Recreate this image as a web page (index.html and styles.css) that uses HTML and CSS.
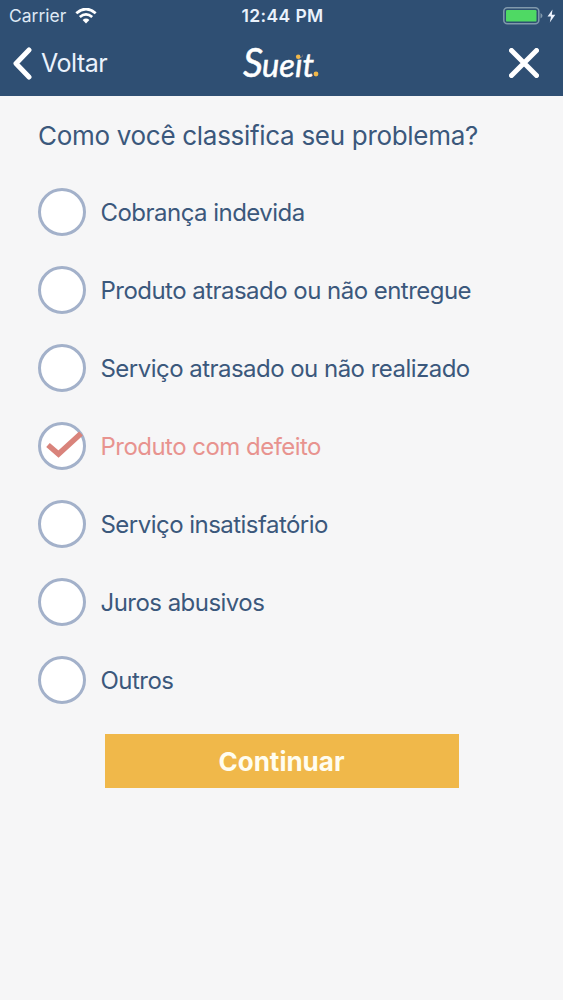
FILE: index.html
```html
<!DOCTYPE html>
<html lang="pt-BR">
<head>
  <meta charset="UTF-8" />
  <title>Sueit</title>
  <meta name="viewport" content="width=device-width, initial-scale=1.0" />
  <link rel="stylesheet" href="styles.css">
</head>
<body>
  <header class="header">
    <div class="status-bar">
      <div class="status-left">
        <span class="carrier">Carrier</span>
        <svg class="wifi" width="22" height="16" viewBox="0 0 22 16">
          <path d="M1.3 5.2 Q11 -3 20.7 5.2" />
          <path d="M4.8 9 Q11 3.8 17.2 9" />
          <path class="wifi-dot" d="M7.6 12 Q11 9.2 14.4 12 L11 15.4 Z" />
        </svg>
      </div>
      <span class="time">12:44 PM</span>
      <div class="status-right">
        <svg width="53" height="18" viewBox="0 0 53 18">
          <rect class="battery-shell" x="0.8" y="0.8" width="35" height="16" rx="3.5" />
          <rect class="battery-level" x="3" y="3" width="30.5" height="11.6" rx="1.2" />
          <path class="battery-tip" d="M37.5 6 Q39.5 7 39.5 8.8 Q39.5 10.6 37.5 11.6 Z" />
          <path class="bolt" d="M49.5 2.5 L44.5 9.6 H48 L46.8 15.5 L52.3 7.8 H48.8 Z" />
        </svg>
      </div>
    </div>

    <nav class="nav">
      <a class="back" href="#">
        <svg class="back-icon" width="20" height="33" viewBox="0 0 20 33">
          <path d="M17 3 L4 16.5 L17 30" />
        </svg>
        <span class="back-label">Voltar</span>
      </a>
      <svg class="logo" width="90" height="60" viewBox="0 0 90 60">
        <text class="logo-initial" x="12" y="43.5" textLength="20" lengthAdjust="spacingAndGlyphs">S</text>
        <text class="logo-text" x="31" y="43.5" textLength="52" lengthAdjust="spacingAndGlyphs">ueit</text>
        <circle class="logo-mask" cx="68.2" cy="20.8" r="3.8" />
        <circle class="logo-dot" cx="67.2" cy="23.8" r="2.3" />
        <circle class="logo-dot" cx="85" cy="41" r="2.4" />
      </svg>
      <a class="close" href="#">
        <svg width="30" height="30" viewBox="0 0 30 30">
          <path d="M2.5 2.5 L27.5 27.5 M27.5 2.5 L2.5 27.5" />
        </svg>
      </a>
    </nav>
  </header>

  <main class="content">
    <h1 class="question">Como você classifica seu problema?</h1>

    <ul class="options">
      <li class="option"><span class="radio"></span><span class="label">Cobrança indevida</span></li>
      <li class="option"><span class="radio"></span><span class="label">Produto atrasado ou não entregue</span></li>
      <li class="option"><span class="radio"></span><span class="label">Serviço atrasado ou não realizado</span></li>
      <li class="option selected">
        <span class="radio">
          <svg class="check" width="48" height="48" viewBox="0 0 48 48">
            <path d="M10 23 L20.5 32 L43 11.5" />
          </svg>
        </span>
        <span class="label">Produto com defeito</span>
      </li>
      <li class="option"><span class="radio"></span><span class="label">Serviço insatisfatório</span></li>
      <li class="option"><span class="radio"></span><span class="label">Juros abusivos</span></li>
      <li class="option"><span class="radio"></span><span class="label">Outros</span></li>
    </ul>

    <button class="btn">Continuar</button>
  </main>
</body>
</html>
```

FILE: styles.css
```css
:root {
  --navy: #2f4f73;
  --text: #3b587c;
  --ring: #a3b1ca;
  --coral: #e8938f;
  --amber: #f0b84a;
}

body {
  margin: 0;
  min-height: 100vh;
  font-family: Inter, 'Liberation Sans', sans-serif;
  background: #f6f6f7;
  color: var(--text);
}

.header {
  height: 96px;
  background: var(--navy);
  color: white;
}

.status-bar {
  display: grid;
  grid-template-columns: 1fr auto 1fr;
  align-items: center;
  height: 31px;
  padding: 0 7px 1px 9px;
}

.status-left {
  display: flex;
  align-items: center;
  gap: 9px;
}

.carrier {
  font-size: 17.5px;
  color: #dfe9f5;
}

.wifi {
  fill: none;
  stroke: white;
  stroke-width: 2.8;
}

.wifi-dot {
  fill: white;
  stroke: none;
}

.time {
  font-size: 17.5px;
  font-weight: 600;
  letter-spacing: 0.4px;
  color: #eaf2fc;
}

.status-right {
  display: flex;
  justify-content: flex-end;
}

.battery-shell {
  fill: none;
  stroke: #8099ac;
  stroke-width: 1.5;
}

.battery-level {
  fill: #4fd964;
}

.battery-tip {
  fill: #8099ac;
}

.bolt {
  fill: #eef4ff;
}

.nav {
  display: grid;
  grid-template-columns: 1fr auto 1fr;
  align-items: center;
  height: 62px;
  padding: 0 24px 0 12px;
}

.back {
  display: flex;
  align-items: center;
  gap: 9px;
  color: #eaf2fc;
  text-decoration: none;
}

.back-icon,
.close svg {
  fill: none;
  stroke: white;
  stroke-width: 5;
  stroke-linecap: round;
  stroke-linejoin: round;
}

.back-label {
  font-size: 25px;
  letter-spacing: -0.5px;
}

.logo {
  font-family: Lato, 'Liberation Sans', sans-serif;
  font-style: italic;
  fill: white;
}

.logo-initial,
.logo-text {
  stroke: white;
  stroke-width: 0.5;
}

.logo-initial {
  font-size: 40px;
}

.logo-text {
  font-size: 32px;
}

.logo-mask {
  fill: var(--navy);
}

.logo-dot {
  fill: var(--amber);
}

.close {
  display: flex;
  justify-content: flex-end;
}

.content {
  padding: 0 38px;
}

.question {
  margin: 0;
  padding-top: 20px;
  font-size: 26px;
  font-weight: 400;
  line-height: 40px;
  letter-spacing: -0.3px;
  white-space: nowrap;
}

.options {
  display: flex;
  flex-direction: column;
  gap: 30px;
  margin: 32px 0 30px;
  padding: 0;
  list-style: none;
}

.option {
  display: flex;
  align-items: center;
  gap: 15px;
  font-size: 24px;
  letter-spacing: -0.53px;
  white-space: nowrap;
}

.radio {
  box-sizing: border-box;
  width: 48px;
  height: 48px;
  margin-left: -0.5px;
  border: 3px solid var(--ring);
  border-radius: 50%;
  background: white;
}

.check {
  display: block;
  margin: -3px;
  fill: none;
  stroke: #d9837b;
  stroke-width: 5.5;
}

.selected {
  color: var(--coral);
}

.btn {
  display: block;
  width: 354px;
  height: 54px;
  margin: 0 auto;
  padding: 0;
  border: none;
  background: var(--amber);
  color: #fffdf0;
  font-family: inherit;
  font-size: 26px;
  font-weight: 700;
  cursor: pointer;
}
```
